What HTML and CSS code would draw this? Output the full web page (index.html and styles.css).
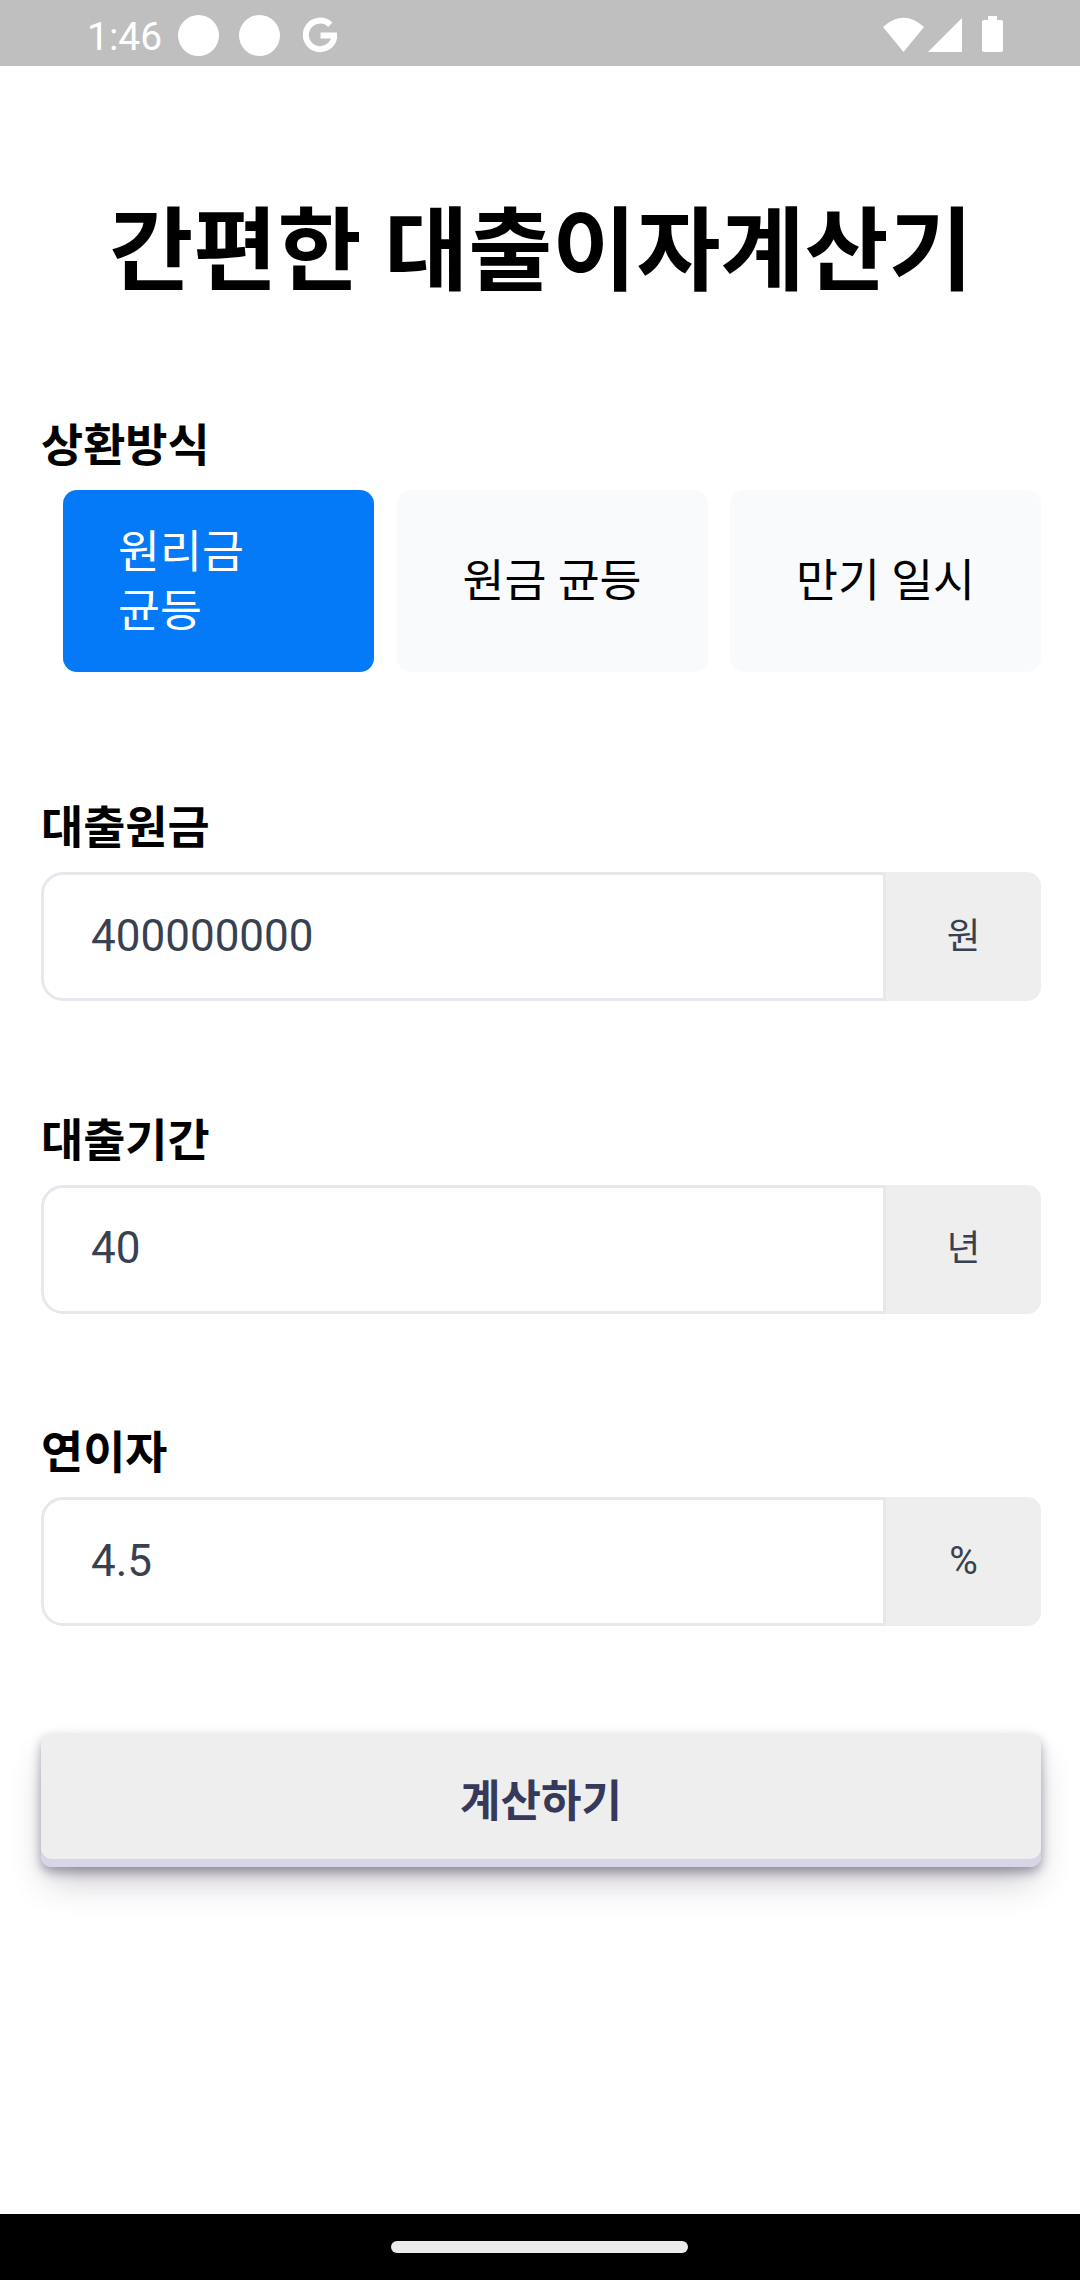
FILE: index.html
```html
<!DOCTYPE html>
<html lang="ko">
<head>
  <meta charset="UTF-8">
  <meta name="viewport" content="width=device-width, initial-scale=1.0">
  <title>간편한 대출이자계산기</title>
  <link rel="stylesheet" href="styles.css">
</head>
<body>
  <header class="status">
    <span class="time">1:46</span>
    <i class="dot"></i>
    <i class="dot"></i>
    <svg class="google" width="34" height="36" viewBox="0 0 34 36">
      <path d="M27.200 7.800A14.300 14.300 0 1 0 31.400 18.500H17.500" fill="none" stroke="#fff" stroke-width="6"/>
    </svg>
    <svg class="signal" width="122" height="38" viewBox="0 0 122 38">
      <path d="M0 11Q20.500 -7.500 41 11L20.500 36z" fill="#fff"/>
      <path d="M45 36L79 2V36z" fill="#fff"/>
      <path d="M105 0h9v4h4a2 2 0 0 1 2 2v28a2 2 0 0 1-2 2h-17a2 2 0 0 1-2-2V6a2 2 0 0 1 2-2h4z" fill="#fff"/>
    </svg>
  </header>

  <main>
    <h1>간편한 대출이자계산기</h1>

    <section class="field types">
      <h2>상환방식</h2>
      <ul class="tabs">
        <li class="on"><span>원리금<br>균등</span></li>
        <li><span>원금 균등</span></li>
        <li><span>만기 일시</span></li>
      </ul>
    </section>

    <section class="field">
      <h2>대출원금</h2>
      <div class="group">
        <input type="text" value="400000000">
        <span class="unit">원</span>
      </div>
    </section>

    <section class="field">
      <h2>대출기간</h2>
      <div class="group">
        <input type="text" value="40">
        <span class="unit">년</span>
      </div>
    </section>

    <section class="field">
      <h2>연이자</h2>
      <div class="group">
        <input type="text" value="4.5">
        <span class="unit percent">%</span>
      </div>
    </section>

    <button class="calc" type="button">계산하기</button>
  </main>

  <footer class="navbar"><i></i></footer>
</body>
</html>
```
FILE: styles.css
```css
*{padding:0;margin:0;box-sizing:border-box}
body {
  display: flex;
  flex-direction: column;
  height: 2280px;
  background: #fff;
  color: #000;
  font-family: Roboto, "Noto Sans CJK KR", sans-serif;
  font-size: 45.600px;
}

/* status bar */
.status {
  display: flex;
  align-items: center;
  height: 66px;
  padding: 4px 75px 0 87px;
  background: #bfbfbf;
}
.time {
  width: 91px;
  padding-top: 3px;
  line-height: 60px;
  font-size: 39px;
  color: #fff;
}
.dot {
  width: 41px;
  height: 41px;
  margin-right: 20px;
  border-radius: 50%;
  background: #fff;
}
.google {
  margin-left: 3px;
}
.signal {
  margin-left: auto;
}

main {
  flex: 1;
  padding: 0 39px 0 41px;
}
h1 {
  margin-top: 118px;
  height: 136px;
  line-height: 136px;
  font-size: 91.400px;
  font-weight: 700;
  text-align: center;
  white-space: nowrap;
}
h2 {
  height: 60px;
  line-height: 60px;
  font-size: 45.800px;
  font-weight: 700;
}

.field {
  margin-bottom: 110.500px;
}
.field h2 {
  margin-bottom: 13px;
}
.types {
  margin-top: 97px;
  margin-bottom: 127px;
}
.field:last-of-type {
  margin-bottom: 108px;
}

.tabs {
  display: flex;
  gap: 22.500px;
  padding-left: 22px;
  list-style: none;
}
.tabs li {
  flex: 1 1 0;
  display: flex;
  align-items: center;
  justify-content: center;
  height: 182px;
  border-radius: 14px;
  background: #f8fafc;
  line-height: 59px;
}
.tabs .on {
  justify-content: flex-start;
  background: #047af8;
  color: #fff;
}
.tabs .on span {
  margin-left: 55px;
}
.tabs span {
  padding-top: 1px;
  white-space: nowrap;
}

.group {
  display: flex;
  height: 129px;
}
.group input {
  width: 845px;
  padding: 0 47px 2px;
  border: 3px solid #e5e8ec;
  border-radius: 22px 0 0 22px;
  background: #fff;
  color: #374151;
  font-family: inherit;
  font-size: 44px;
  outline: none;
}
.unit {
  flex: 1;
  display: flex;
  align-items: center;
  justify-content: center;
  padding-bottom: 7px;
  border-radius: 0 14px 14px 0;
  background: #eee;
  color: #374151;
  font-size: 36.500px;
}
.percent {
  padding-bottom: 2px;
  font-size: 39px;
}

.calc {
  display: block;
  width: 100%;
  height: 133px;
  padding-bottom: 6px;
  border: 0;
  border-radius: 11px;
  background: #eee;
  box-shadow: rgba(45,35,66,.4) 0 5px 11px, rgba(45,35,66,.3) 0 19px 36px -8px, #d6d6e7 0 -8px 0 inset;
  color: #36395a;
  font-family: inherit;
  font-size: 44px;
  font-weight: 700;
}

/* gesture bar */
.navbar {
  display: flex;
  justify-content: center;
  height: 66px;
  padding: 27px 2px 0 0;
  background: #000;
}
.navbar i {
  width: 297px;
  height: 12px;
  border-radius: 6px;
  background: #ebebeb;
}
```
